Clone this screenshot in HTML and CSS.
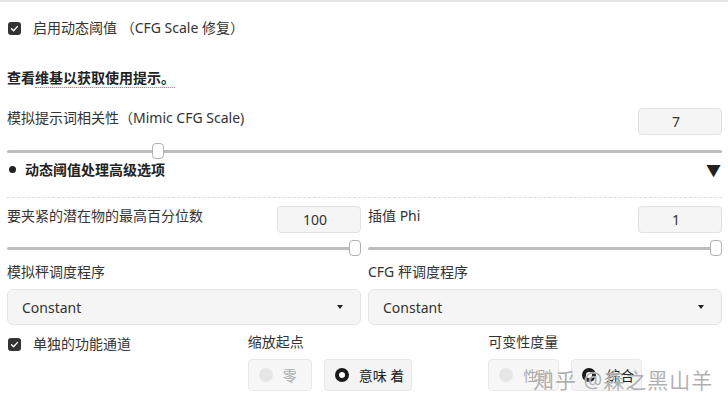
FILE: index.html
```html
<!DOCTYPE html>
<html lang="zh">
<head>
  <meta charset="UTF-8"/>
  <meta name="viewport" content="width=device-width,initial-scale=1.0"/>
  <title>Dynamic Thresholding</title>
  <link rel="stylesheet" href="styles.css">
</head>
<body>
<div class="panel">
  <label class="check-row">
    <span class="checkbox"><svg viewBox="0 0 12 12" width="9" height="9"><path d="M2 6.2 L4.8 9 L10 3.2" fill="none" stroke="#fff" stroke-width="1.8" stroke-linecap="round" stroke-linejoin="round"/></svg></span>
    <span>启用动态阈值 （CFG Scale 修复）</span>
  </label>

  <p class="info">查看<a class="wiki" href="#">维基以获取使用提示。</a></p>

  <div class="field">
    <div class="field-head">
      <span>模拟提示词相关性（Mimic CFG Scale)</span>
      <input class="num" type="text" value="7"/>
    </div>
    <input class="range" type="range" min="1" max="30" value="7"/>
  </div>

  <div class="accordion">
    <span class="dot"></span>
    <span class="acc-title">动态阈值处理高级选项</span>
    <span class="tri">▼</span>
  </div>

  <div class="grid2">
    <div class="field">
      <div class="field-head">
        <span>要夹紧的潜在物的最高百分位数</span>
        <input class="num" type="text" value="100"/>
      </div>
      <input class="range" type="range" min="90" max="100" value="100"/>
    </div>
    <div class="field">
      <div class="field-head">
        <span>插值 Phi</span>
        <input class="num" type="text" value="1"/>
      </div>
      <input class="range" type="range" min="0" max="1" step="0.01" value="1"/>
    </div>
    <div class="select-field">
      <div class="label">模拟秤调度程序</div>
      <div class="select"><span>Constant</span><span class="caret"></span></div>
    </div>
    <div class="select-field">
      <div class="label">CFG 秤调度程序</div>
      <div class="select"><span>Constant</span><span class="caret"></span></div>
    </div>
  </div>

  <div class="grid3">
    <label class="check-row small">
      <span class="checkbox"><svg viewBox="0 0 12 12" width="9" height="9"><path d="M2 6.2 L4.8 9 L10 3.2" fill="none" stroke="#fff" stroke-width="1.8" stroke-linecap="round" stroke-linejoin="round"/></svg></span>
      <span>单独的功能通道</span>
    </label>
    <div class="radio-group">
      <div class="label">缩放起点</div>
      <div class="radios">
        <span class="radio disabled w64"><span class="circle"></span>零</span>
        <span class="radio on w88"><span class="circle"></span>意味 着</span>
      </div>
    </div>
    <div class="radio-group">
      <div class="label">可变性度量</div>
      <div class="radios">
        <span class="radio disabled w71"><span class="circle"></span>性别</span>
        <span class="radio on w71"><span class="circle"></span>综合</span>
      </div>
    </div>
  </div>

  <div class="watermark">知乎 @森之黑山羊</div>
</div>
</body>
</html>
```
FILE: styles.css
```css
body { margin:0; background:#fff; font-family:"Noto Sans","Noto Sans CJK SC",sans-serif; font-size:14px; color:#333; overflow:hidden; }
.panel { position:relative; border-top:2px solid #e6e6e6; padding:16px 6px 0 7px; height:406px; box-sizing:border-box; }

.check-row { display:flex; align-items:center; height:20px; line-height:20px; padding-left:1px; }
.checkbox { width:13px; height:13px; background:#333; border-radius:3px; display:flex; align-items:center; justify-content:center; margin-right:12px; flex:none; }

.info { margin:30px 0 0; height:20px; line-height:20px; font-weight:bold; color:#222; }
.wiki { color:#222; text-decoration:none; border-bottom:1px dotted #4fb3c8; }

.field { margin-top:20px; }
.field-head { display:flex; justify-content:space-between; align-items:flex-start; line-height:20px; }
.num { width:84px; height:27px; box-sizing:border-box; border:1px solid #e2e2e2; border-radius:4px; background:#f5f5f5; text-align:center; font:inherit; color:#333; padding:0 8px 0 0; }

.range { -webkit-appearance:none; appearance:none; display:block; width:100%; margin:8px 0 0; height:16px; background:transparent; }
.range::-webkit-slider-runnable-track { height:3px; background:#bdbdbd; border-radius:2px; }
.range::-webkit-slider-thumb { -webkit-appearance:none; width:12px; height:16px; margin-top:-6.5px; background:#fff; border:1px solid #b0b0b0; border-radius:4px; box-sizing:border-box; }

.accordion { display:flex; align-items:center; height:20px; font-weight:bold; color:#222; border-bottom:1px dashed #dcdcdc; padding-bottom:18px; }
.dot { width:7px; height:7px; border-radius:50%; background:#222; margin:0 9px 0 2px; }
.acc-title { flex:1; }
.tri { font-size:15px; font-weight:normal; margin-right:1px; }

.grid2 { display:grid; grid-template-columns:1fr 1fr; column-gap:7px; }
.grid2 .field { margin-top:8px; }
.grid2 .range { margin-top:7px; }
.select-field { margin-top:6px; }
.label { line-height:20px; height:20px; }
.select { margin-top:7px; height:36px; box-sizing:border-box; border:1px solid #e4e4e4; border-radius:6px; background:#f5f5f5; display:flex; align-items:center; justify-content:space-between; padding:0 17px 0 14px; }
.caret { width:0; height:0; border-left:3.5px solid transparent; border-right:3.5px solid transparent; border-top:4px solid #222; }

.grid3 { display:grid; grid-template-columns:repeat(3,1fr); column-gap:7px; margin-top:7px; }
.grid3 .check-row { height:24px; }
.radios { display:flex; gap:12px; margin-top:7px; }
.radio { display:flex; align-items:center; height:32px; box-sizing:border-box; border:1px solid #e8e8e8; border-radius:4px; background:#f4f4f4; padding-left:10px; }
.w64 { width:64px; }
.w71 { width:71px; }
.w88 { width:88px; }
.circle { width:14px; height:14px; border-radius:50%; margin-right:10px; box-sizing:border-box; }
.radio.disabled { color:#aaa; background:#f7f7f7; }
.radio.disabled .circle { background:#e6e6e6; }
.radio.on .circle { background:#fff; border:4.5px solid #1a1a1a; }
.radio.on { color:#222; }

.watermark { position:absolute; left:533px; top:362px; font-size:21px; color:rgba(150,150,150,0.75); letter-spacing:1px; text-shadow:0 0 1px #fff; }
```
